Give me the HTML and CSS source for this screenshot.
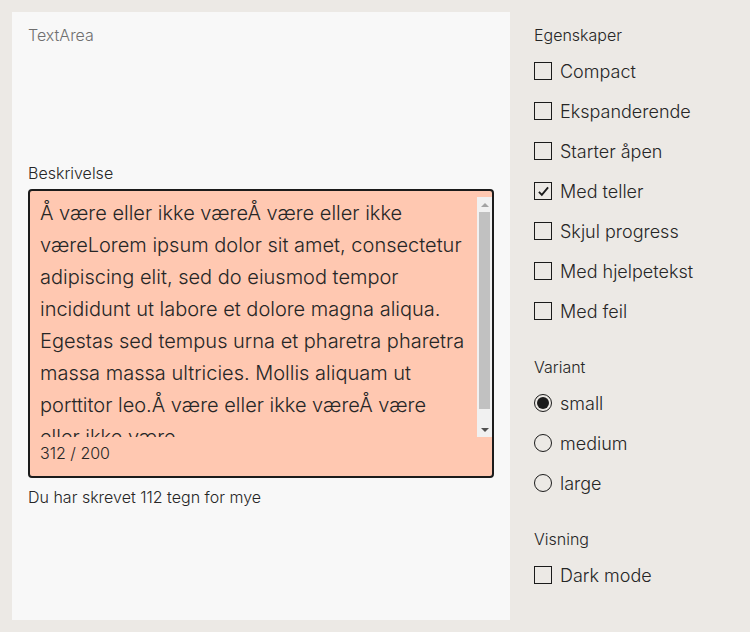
FILE: index.html
```html
<!DOCTYPE html>
<html lang="no">
<head>
<meta charset="utf-8">
<title>TextArea</title>
<link rel="stylesheet" href="styles.css">
</head>
<body>
<div class="layout">
  <main class="panel">
    <div class="panel-title">TextArea</div>
    <div class="field">
      <label class="field-label" for="beskrivelse">Beskrivelse</label>
      <div class="box">
        <div class="input-row">
          <textarea id="beskrivelse" class="textarea">Å være eller ikke væreÅ være eller ikke væreLorem ipsum dolor sit amet, consectetur adipiscing elit, sed do eiusmod tempor incididunt ut labore et dolore magna aliqua. Egestas sed tempus urna et pharetra pharetra massa massa ultricies. Mollis aliquam ut porttitor leo.Å være eller ikke væreÅ være
eller ikke være</textarea>
          <div class="scrollbar">
            <span class="arrow up"></span>
            <span class="track"><span class="thumb"></span></span>
            <span class="arrow down"></span>
          </div>
        </div>
        <div class="counter">312 / 200</div>
      </div>
      <div class="error">Du har skrevet 112 tegn for mye</div>
    </div>
  </main>
  <aside class="sidebar">
    <section class="group">
      <div class="legend">Egenskaper</div>
      <label class="row"><span class="check"></span>Compact</label>
      <label class="row"><span class="check"></span>Ekspanderende</label>
      <label class="row"><span class="check"></span>Starter åpen</label>
      <label class="row"><span class="check"><svg viewBox="0 0 18 18" width="15" height="15"><path d="M3.5 9.5 L7 13 L14.5 4" fill="none" stroke="#1b1b1b" stroke-width="2.2"/></svg></span>Med teller</label>
      <label class="row"><span class="check"></span>Skjul progress</label>
      <label class="row"><span class="check"></span>Med hjelpetekst</label>
      <label class="row"><span class="check"></span>Med feil</label>
    </section>
    <section class="group">
      <div class="legend">Variant</div>
      <label class="row"><span class="radio checked"></span>small</label>
      <label class="row"><span class="radio"></span>medium</label>
      <label class="row"><span class="radio"></span>large</label>
    </section>
    <section class="group">
      <div class="legend">Visning</div>
      <label class="row"><span class="check"></span>Dark mode</label>
    </section>
  </aside>
</div>
</body>
</html>
```
FILE: styles.css
```css
html, body {
  margin: 0;
  padding: 0;
  background: #ece9e5;
  font-family: Inter, "Liberation Sans", sans-serif;
  font-weight: 300;
  color: #262626;
}
.layout {
  display: flex;
  gap: 24px;
  padding: 12px;
  height: 632px;
  box-sizing: border-box;
}
.panel {
  width: 498px;
  background: #f8f8f8;
  padding: 11px 16px;
  box-sizing: border-box;
}
.panel-title {
  font-size: 16px;
  line-height: 24px;
  color: #6f6f6f;
}
.field {
  margin-top: 114px;
}
.field-label {
  display: block;
  font-size: 16px;
  line-height: 24px;
  margin-bottom: 4px;
}
.box {
  border: 2px solid #1b1b1b;
  border-radius: 4px;
  background: #ffc8b1;
  padding: 6px 0 11px 0;
}
.input-row {
  display: flex;
  height: 240px;
}
.textarea {
  display: block;
  flex: 1;
  height: 240px;
  box-sizing: border-box;
  border: none;
  outline: none;
  resize: none;
  background: transparent;
  padding: 0 0 0 10px;
  margin: 0;
  font-family: inherit;
  font-weight: 300;
  font-size: 20px;
  line-height: 32px;
  color: #262626;
  overflow: hidden;
}
.scrollbar {
  width: 15px;
  background: #f1f1f1;
  display: flex;
  flex-direction: column;
}
.arrow {
  height: 15px;
  display: flex;
  align-items: center;
  justify-content: center;
}
.arrow::before {
  content: "";
  border-left: 4px solid transparent;
  border-right: 4px solid transparent;
}
.arrow.up::before {
  border-bottom: 4px solid #a3a3a3;
}
.arrow.down::before {
  border-top: 4px solid #505050;
}
.track {
  flex: 1;
  display: flex;
  flex-direction: column;
  padding: 0 2px;
}
.thumb {
  height: 197px;
  background: #c1c1c1;
}
.counter {
  margin-top: 4px;
  padding-left: 10px;
  font-size: 16px;
  line-height: 24px;
}
.error {
  margin-top: 7px;
  font-size: 16px;
  line-height: 24px;
}
.sidebar {
  padding-top: 11px;
  display: flex;
  flex-direction: column;
  gap: 24px;
}
.legend {
  font-size: 16px;
  line-height: 24px;
  margin-bottom: 4px;
}
.row {
  display: flex;
  align-items: center;
  gap: 8px;
  height: 40px;
  font-size: 18px;
}
.check {
  width: 18px;
  height: 18px;
  box-sizing: border-box;
  border: 1.5px solid #1b1b1b;
  display: flex;
  align-items: center;
  justify-content: center;
}
.radio {
  width: 18px;
  height: 18px;
  box-sizing: border-box;
  border: 1.5px solid #1b1b1b;
  border-radius: 50%;
  position: relative;
}
.radio.checked::after {
  content: "";
  position: absolute;
  left: 1.5px;
  top: 1.5px;
  width: 12px;
  height: 12px;
  border-radius: 50%;
  background: #1b1b1b;
}
```
